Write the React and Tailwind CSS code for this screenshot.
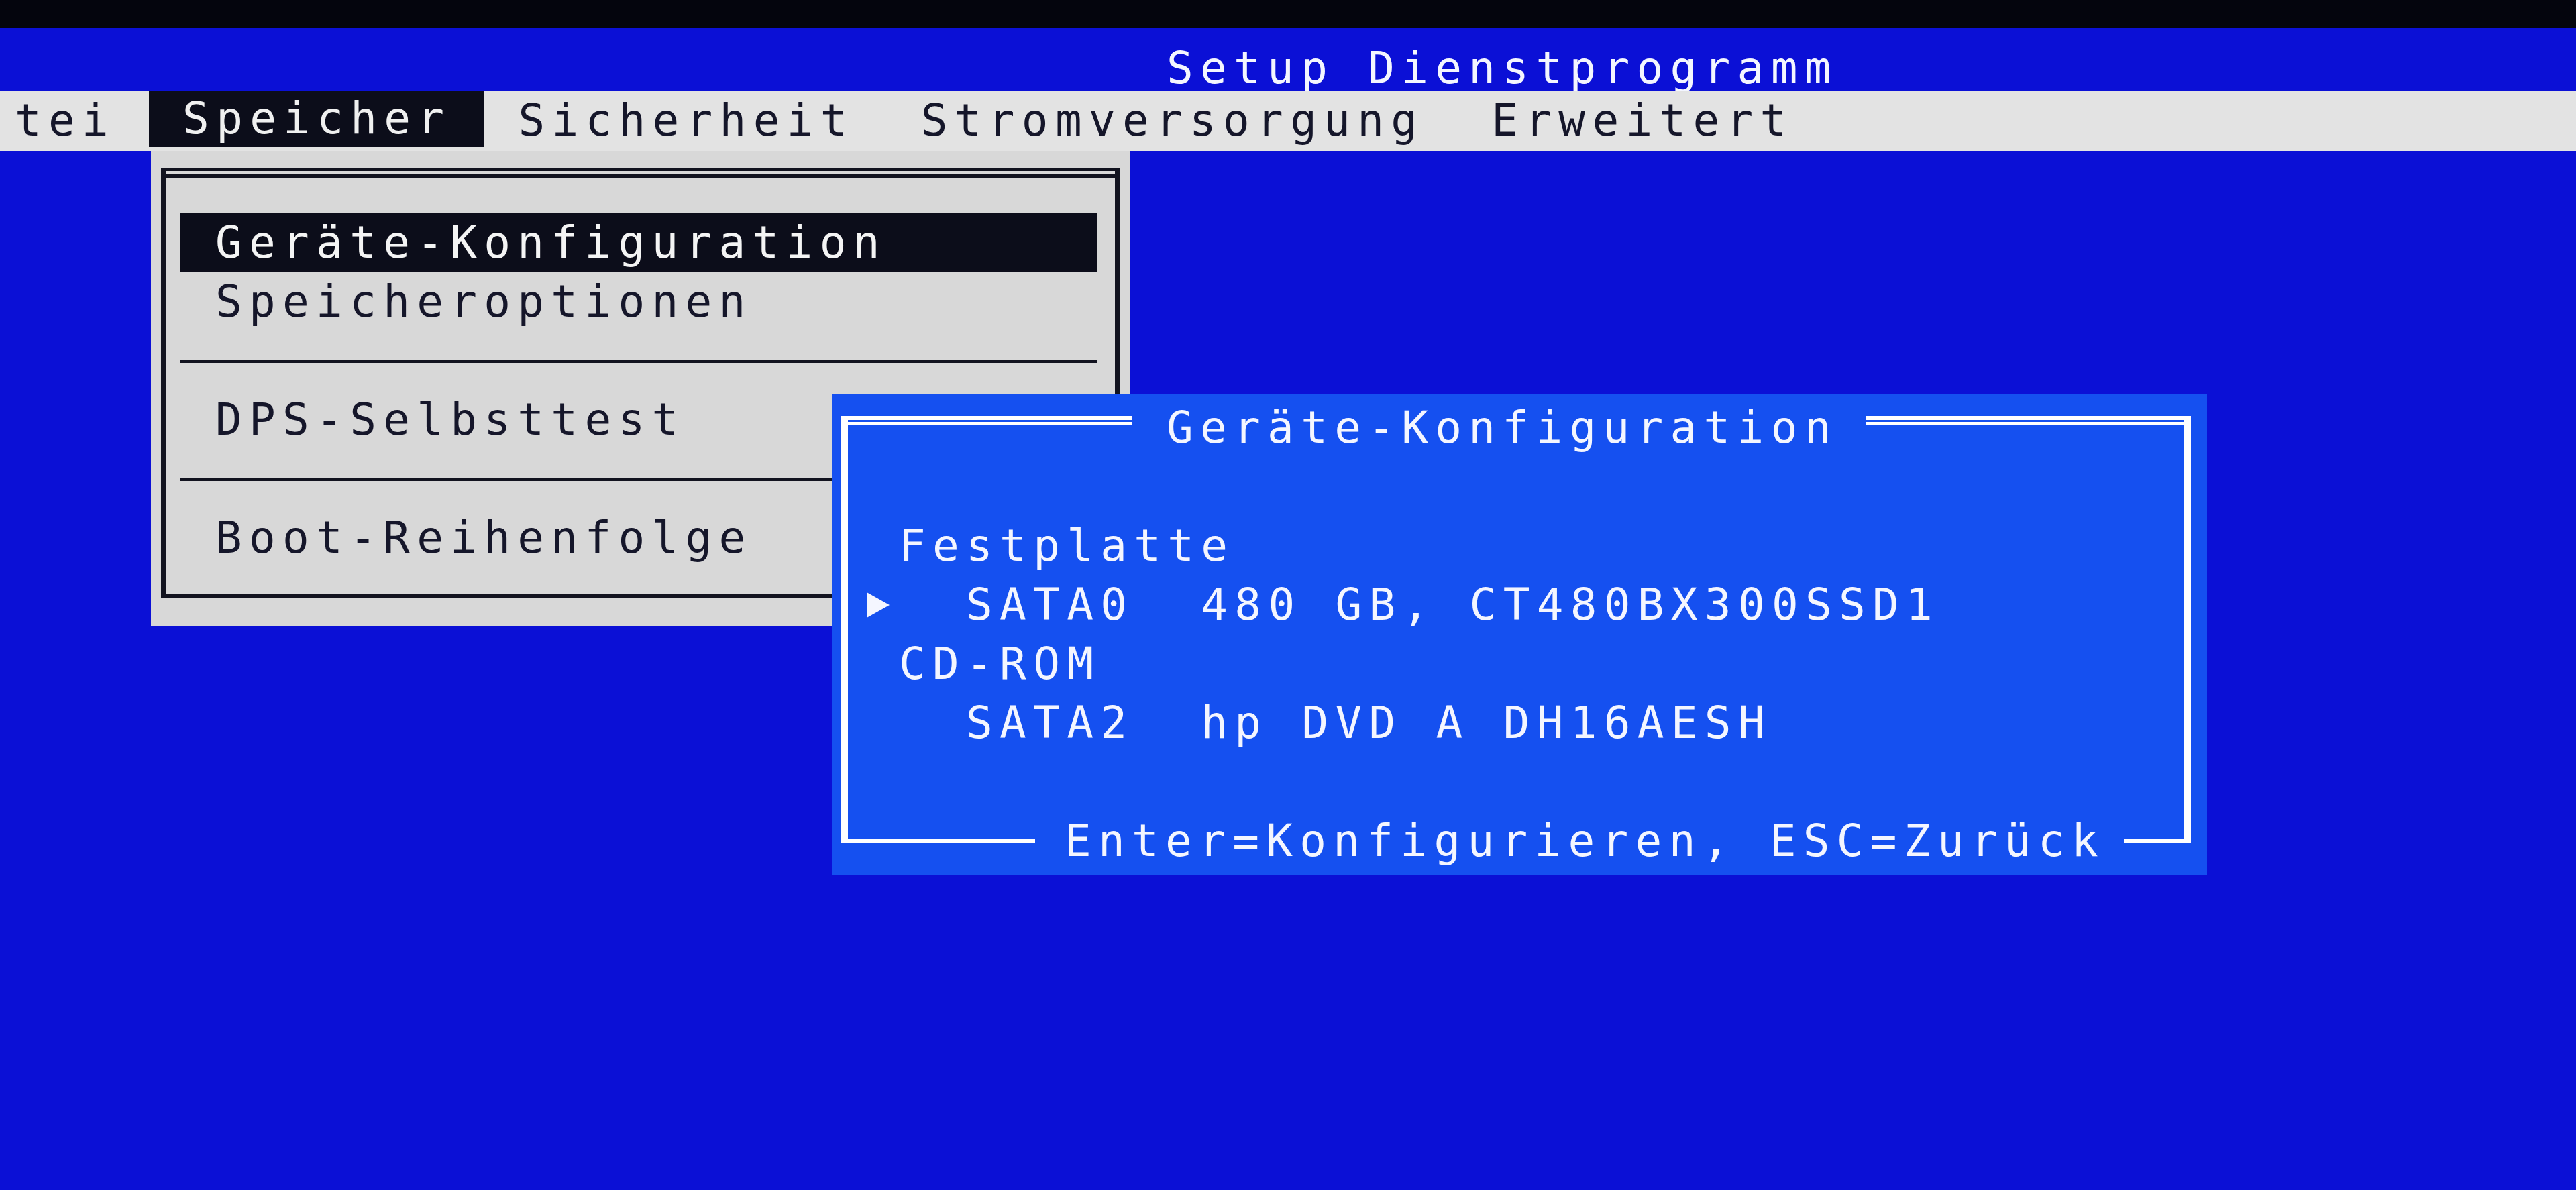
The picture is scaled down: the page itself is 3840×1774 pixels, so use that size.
import React from 'react'

const menu = ['Sicherheit', 'Stromversorgung', 'Erweitert']

function Arrow() {
  return (
    <svg width="34" height="38" viewBox="0 0 34 38" className="ml-[2px]">
      <path d="M0 0 L34 19 L0 38 Z" fill="#f4f6ff" />
    </svg>
  )
}

function DropRow({ label, active }) {
  return (
    <div className={`h-[88px] leading-[88px] pl-[52px] ${active ? 'bg-[#0c0d1a] text-[#f4f4f4]' : 'text-[#15162a]'}`}>
      {label}
    </div>
  )
}

function Separator() {
  return (
    <div className="h-[88px] flex items-center">
      <div className="h-[5px] w-full bg-[#12131f]" />
    </div>
  )
}

function DialogRow({ arrow, text }) {
  return (
    <div className="h-[88px] flex items-center pl-[26px]">
      <div className="w-[50px] flex items-center">{arrow && <Arrow />}</div>
      <span className="whitespace-pre leading-[88px]">{text}</span>
    </div>
  )
}

export default function App() {
  return (
    <div className="w-[3840px] h-[1774px] overflow-hidden bg-[#0b10d6] flex flex-col font-['DejaVu_Sans_Mono',monospace] text-[66px] tracking-[10.3px]">
      <div className="h-[42px] bg-[#04050d]" />

      {/* title */}
      <div className="h-[93px] flex items-end pl-[1739px] pb-px">
        <span className="leading-[64px] text-[#f4f6ff]">Setup Dienstprogramm</span>
      </div>

      {/* menu bar */}
      <div className="h-[90px] bg-[#e3e3e3] flex text-[#15162a]">
        <div className="flex items-center pl-[22px] pr-[50px] leading-[64px]">tei</div>
        <div className="flex items-center px-[50px] mb-[6px] bg-[#0c0d1a] text-[#f0f0f0] leading-[64px]">Speicher</div>
        {menu.map(m => (
          <div key={m} className="flex items-center px-[50px] leading-[64px]">{m}</div>
        ))}
      </div>

      <div className="flex-1 relative">
        {/* Speicher dropdown */}
        <div className="absolute left-[225px] top-0 w-[1460px] h-[708px] bg-[#d8d8d8] pt-[25px] px-[15px]">
          <div className="border-x-[8px] border-t-[5px] border-b-[5px] border-[#12131f]">
            <div className="mt-[5px] h-[5px] bg-[#12131f]" />
            <div className="pt-[53px] pb-[40px] pl-[21px] pr-[26px]">
              <DropRow label="Geräte-Konfiguration" active />
              <DropRow label="Speicheroptionen" />
              <Separator />
              <DropRow label="DPS-Selbsttest" />
              <Separator />
              <DropRow label="Boot-Reihenfolge" />
            </div>
          </div>
        </div>

        {/* Geräte-Konfiguration dialog */}
        <div className="absolute left-[1240px] top-[363px] w-[2050px] h-[716px] bg-[#1550f0] pt-[6px] pl-[14px] pr-[24px] text-[#f4f6ff]">
          <div className="h-[88px] flex">
            <div className="w-[433px] mt-[26px] border-l-[10px] border-t-[6px] border-white">
              <div className="mt-[3px] h-[5px] bg-white" />
            </div>
            <span className="leading-[88px] pl-[52px] pr-[41px]">Geräte-Konfiguration</span>
            <div className="flex-1 mt-[26px] border-r-[10px] border-t-[6px] border-white">
              <div className="mt-[3px] h-[5px] bg-white" />
            </div>
          </div>

          <div className="border-x-[10px] border-white">
            <div className="h-[88px]" />
            <DialogRow text="Festplatte" />
            <DialogRow arrow text="  SATA0  480 GB, CT480BX300SSD1" />
            <DialogRow text="CD-ROM" />
            <DialogRow text="  SATA2  hp DVD A DH16AESH" />
            <div className="h-[88px]" />
          </div>

          <div className="h-[88px] flex">
            <div className="w-[289px] h-[46px] border-l-[10px] border-b-[6px] border-white" />
            <span className="leading-[88px] pl-[44px] pr-[28px] whitespace-pre">Enter=Konfigurieren, ESC=Zurück</span>
            <div className="flex-1 h-[46px] border-r-[10px] border-b-[6px] border-white" />
          </div>
        </div>
      </div>
    </div>
  )
}
